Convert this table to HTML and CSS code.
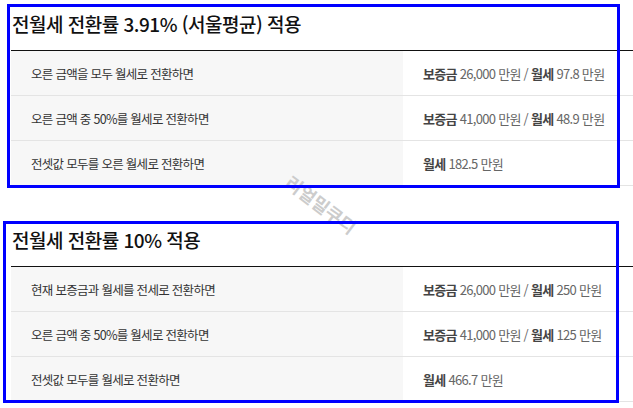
FILE: index.html
```html
<!DOCTYPE html>
<html lang="ko">
<head>
<meta charset="utf-8">
<title>전월세 전환률</title>
<link rel="stylesheet" href="styles.css">
</head>
<body>
<div class="page">
  <section class="block">
    <h2 class="title">전월세 전환률 3.91% (서울평균) 적용</h2>
    <div class="table">
      <div class="row">
        <div class="label">오른 금액을 모두 월세로 전환하면</div>
        <div class="value"><b>보증금</b> 26,000 만원 / <b>월세</b> 97.8 만원</div>
      </div>
      <div class="row">
        <div class="label">오른 금액 중 50%를 월세로 전환하면</div>
        <div class="value"><b>보증금</b> 41,000 만원 / <b>월세</b> 48.9 만원</div>
      </div>
      <div class="row">
        <div class="label">전셋값 모두를 오른 월세로 전환하면</div>
        <div class="value"><b>월세</b> 182.5 만원</div>
      </div>
    </div>
  </section>
  <section class="block second">
    <h2 class="title">전월세 전환률 10% 적용</h2>
    <div class="table">
      <div class="row">
        <div class="label">현재 보증금과 월세를 전세로 전환하면</div>
        <div class="value"><b>보증금</b> 26,000 만원 / <b>월세</b> 250 만원</div>
      </div>
      <div class="row">
        <div class="label">오른 금액 중 50%를 월세로 전환하면</div>
        <div class="value"><b>보증금</b> 41,000 만원 / <b>월세</b> 125 만원</div>
      </div>
      <div class="row">
        <div class="label">전셋값 모두를 월세로 전환하면</div>
        <div class="value"><b>월세</b> 466.7 만원</div>
      </div>
    </div>
  </section>
  <div class="watermark">리얼밀쿠디</div>
  <div class="highlight hl-one"></div>
  <div class="highlight hl-two"></div>
</div>
</body>
</html>
```
FILE: styles.css
```css
html, body {
  margin: 0;
  padding: 0;
  background: #fff;
}
body {
  font-family: "Noto Sans CJK KR", "Noto Sans", sans-serif;
  color: #333;
}
.page {
  position: relative;
  width: 633px;
  height: 408px;
  padding-left: 11px;
  box-sizing: border-box;
  overflow: hidden;
}
.block.second {
  margin-top: 30px;
}
.title {
  margin: 0;
  height: 50px;
  display: flex;
  align-items: center;
  padding-bottom: 4px;
  box-sizing: border-box;
  font-size: 19px;
  font-weight: 500;
  letter-spacing: -0.5px;
  color: #111;
  padding-left: 1px;
}
.table {
  border-top: 1px solid #111;
}
.row {
  display: grid;
  grid-template-columns: 392px 1fr;
  height: 45px;
  border-bottom: 1px solid #e4e4e4;
  box-sizing: border-box;
}
.label {
  background: #f7f7f7;
  display: flex;
  align-items: center;
  padding-left: 20px;
  font-size: 12.5px;
  letter-spacing: -0.7px;
  color: #333;
}
.value {
  display: flex;
  align-items: center;
  padding-left: 20px;
  font-size: 13px;
  letter-spacing: -0.7px;
  color: #666;
  white-space: pre;
}
.value b {
  font-weight: 700;
  color: #444;
}
.watermark {
  position: absolute;
  left: 280px;
  top: 191px;
  font-size: 18px;
  font-weight: 700;
  color: #cccccc;
  transform: rotate(37deg);
}
.highlight {
  position: absolute;
  border: 3px solid #0000ff;
  box-sizing: border-box;
  pointer-events: none;
}
.hl-one {
  left: 7px;
  top: 4px;
  width: 613px;
  height: 184px;
}
.hl-two {
  left: 3px;
  top: 221px;
  width: 616px;
  height: 182px;
}
```
